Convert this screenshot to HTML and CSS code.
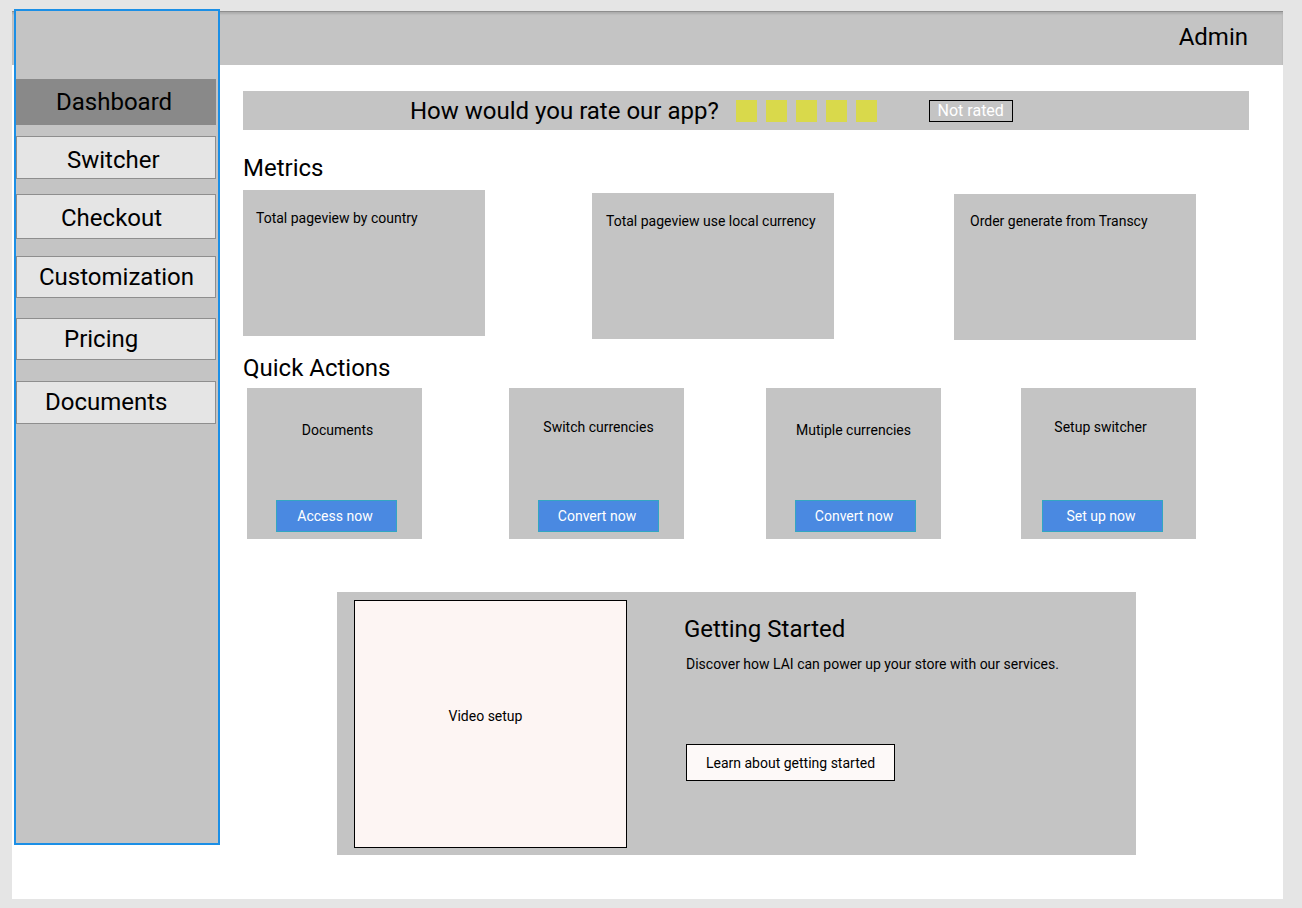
FILE: index.html
```html
<!DOCTYPE html>
<html lang="en">
<head>
<meta charset="utf-8">
<title>Dashboard</title>
<link rel="stylesheet" href="styles.css">
</head>
<body>
<div class="frame">
  <header class="topbar">
    <span class="admin">Admin</span>
  </header>

  <nav class="sidebar">
    <div class="nav-item nav-item--active nav-dashboard">Dashboard</div>
    <div class="nav-item nav-switcher">Switcher</div>
    <div class="nav-item nav-checkout">Checkout</div>
    <div class="nav-item nav-custom">Customization</div>
    <div class="nav-item nav-pricing">Pricing</div>
    <div class="nav-item nav-documents">Documents</div>
  </nav>

  <main class="main">
    <section class="rating">
      <span class="rate-text">How would you rate our app?</span>
      <div class="stars">
        <span class="star"></span>
        <span class="star"></span>
        <span class="star"></span>
        <span class="star"></span>
        <span class="star"></span>
      </div>
      <span class="not-rated">Not rated</span>
    </section>

    <h2 class="section-title section-title--metrics">Metrics</h2>
    <div class="metrics">
      <div class="metric metric--1">Total pageview by country</div>
      <div class="metric metric--2">Total pageview use local currency</div>
      <div class="metric metric--3">Order generate from Transcy</div>
    </div>

    <h2 class="section-title section-title--qa">Quick Actions</h2>
    <div class="actions">
      <div class="action action--1">
        <div class="action-title">Documents</div>
        <button class="action-btn">Access now</button>
      </div>
      <div class="action action--2">
        <div class="action-title">Switch currencies</div>
        <button class="action-btn">Convert now</button>
      </div>
      <div class="action action--3">
        <div class="action-title">Mutiple currencies</div>
        <button class="action-btn">Convert now</button>
      </div>
      <div class="action action--4">
        <div class="action-title">Setup switcher</div>
        <button class="action-btn">Set up now</button>
      </div>
    </div>

    <section class="started">
      <div class="video">Video setup</div>
      <div class="started-body">
        <h3 class="started-title">Getting Started</h3>
        <p class="started-text">Discover how LAI can power up your store with our services.</p>
        <button class="started-btn">Learn about getting started</button>
      </div>
    </section>
  </main>
</div>
</body>
</html>
```

FILE: styles.css
```css
* { box-sizing: border-box; }

html, body {
  margin: 0;
  padding: 0;
  height: 908px;
  overflow: hidden;
}

body {
  background: #e5e5e5;
  font-family: Roboto, "Liberation Sans", Arial, sans-serif;
  color: #000;
}

.frame {
  margin: 11px 0 0 12px;
  width: 1271px;
  height: 888px;
  background: #ffffff;
  display: grid;
  grid-template-columns: 208px 1fr;
  grid-template-rows: 54px 1fr;
}

/* header */
.topbar {
  grid-column: 1 / -1;
  grid-row: 1;
  background: #c4c4c4;
  border-top: 1px solid #8e8e8e;
  box-shadow: inset 0 2px 2px rgba(0, 0, 0, 0.12);
  display: flex;
  align-items: center;
  justify-content: flex-end;
  padding: 0 35px 4px 0;
}

.admin {
  font-size: 24px;
  line-height: 28px;
}

/* sidebar */
.sidebar {
  grid-column: 1;
  grid-row: 1 / 3;
  align-self: start;
  z-index: 1;
  margin: -2px 0 0 2px;
  width: 206px;
  height: 836px;
  background: #c4c4c4;
  border: 2px solid #1b8fe6;
  display: flex;
  flex-direction: column;
  align-items: flex-start;
}

.nav-item {
  width: 200px;
  background: #e5e5e5;
  border: 1px solid #8e8e8e;
  display: flex;
  align-items: center;
  font-size: 24px;
  line-height: 28px;
}

.nav-item--active {
  background: #898989;
  border: none;
}

.nav-dashboard { margin-top: 68px; height: 46px; padding-left: 40px; }
.nav-switcher  { margin-top: 11px; height: 43px; padding-left: 50px; padding-top: 4px; }
.nav-checkout  { margin-top: 15px; height: 45px; padding-left: 44px; padding-top: 2px; }
.nav-custom    { margin-top: 17px; height: 42px; padding-left: 22px; }
.nav-pricing   { margin-top: 20px; height: 42px; padding-left: 47px; }
.nav-documents { margin-top: 21px; height: 43px; padding-left: 28px; padding-bottom: 2px; }

/* main */
.main {
  grid-column: 2;
  grid-row: 2;
  padding: 26px 34px 0 23px;
}

.rating {
  height: 39px;
  background: #c4c4c4;
  display: flex;
  align-items: center;
  padding-left: 167px;
}

.rate-text {
  font-size: 24px;
  line-height: 28px;
}

.stars {
  display: flex;
  gap: 9px;
  margin-left: 17px;
}

.star {
  width: 21px;
  height: 22px;
  background: #d9d94b;
}

.not-rated {
  margin-left: 52px;
  width: 84px;
  height: 22px;
  border: 1px solid #000;
  color: #ffffff;
  font-size: 16px;
  display: flex;
  align-items: center;
  justify-content: center;
}

.section-title {
  margin: 0;
  font-weight: 400;
  font-size: 24px;
  line-height: 28px;
}

.section-title--metrics { margin-top: 24px; }
.section-title--qa { margin-top: 14px; }

/* metrics */
.metrics {
  display: flex;
  align-items: flex-start;
  margin-top: 8px;
}

.metric {
  width: 242px;
  height: 146px;
  background: #c4c4c4;
  font-size: 14px;
  line-height: 16px;
  padding-top: 20px;
}

.metric--1 { padding-left: 13px; }
.metric--2 { margin-left: 107px; margin-top: 3px; padding-left: 14px; }
.metric--3 { margin-left: 120px; margin-top: 4px; padding-left: 16px; padding-top: 19px; }

/* quick actions */
.actions {
  display: flex;
  margin-top: 6px;
}

.action {
  width: 175px;
  height: 151px;
  background: #c4c4c4;
  display: flex;
  flex-direction: column;
  padding: 0 0 7px 29px;
}

.action-title {
  font-size: 14px;
  line-height: 16px;
  width: 121px;
  text-align: center;
  white-space: nowrap;
}

.action-btn {
  margin-top: auto;
  width: 121px;
  height: 32px;
  padding: 0 3px 0 0;
  background: #4a89e1;
  border: 1px solid #33a6c2;
  color: #ffffff;
  font-family: inherit;
  font-size: 14px;
}

.action--1 { margin-left: 4px; }
.action--1 .action-title { margin-top: 34px; margin-left: 1px; }
.action--2 { margin-left: 87px; }
.action--2 .action-title { margin-top: 31px; }
.action--3 { margin-left: 82px; }
.action--3 .action-title { margin-top: 34px; margin-left: -2px; }
.action--4 { margin-left: 80px; padding-left: 21px; }
.action--4 .action-title { margin-top: 31px; margin-left: -2px; }

/* getting started */
.started {
  margin: 53px 0 0 94px;
  width: 799px;
  height: 263px;
  background: #c4c4c4;
  display: flex;
  align-items: flex-start;
  padding: 8px 0 0 17px;
}

.video {
  width: 273px;
  height: 248px;
  border: 1px solid #000;
  background: #fdf5f3;
  display: flex;
  align-items: center;
  justify-content: center;
  font-size: 14px;
  line-height: 16px;
  padding: 0 10px 16px 0;
}

.started-body {
  margin-left: 57px;
  display: flex;
  flex-direction: column;
  align-items: flex-start;
}

.started-title {
  margin: 15px 0 0 0;
  font-weight: 400;
  font-size: 24px;
  line-height: 28px;
}

.started-text {
  margin: 13px 0 0 2px;
  font-size: 14px;
  line-height: 16px;
}

.started-btn {
  margin: 72px 0 0 2px;
  width: 209px;
  height: 37px;
  padding: 0;
  background: #fdf9f8;
  border: 1px solid #000;
  font-family: inherit;
  font-size: 14px;
  color: #000;
}
```
